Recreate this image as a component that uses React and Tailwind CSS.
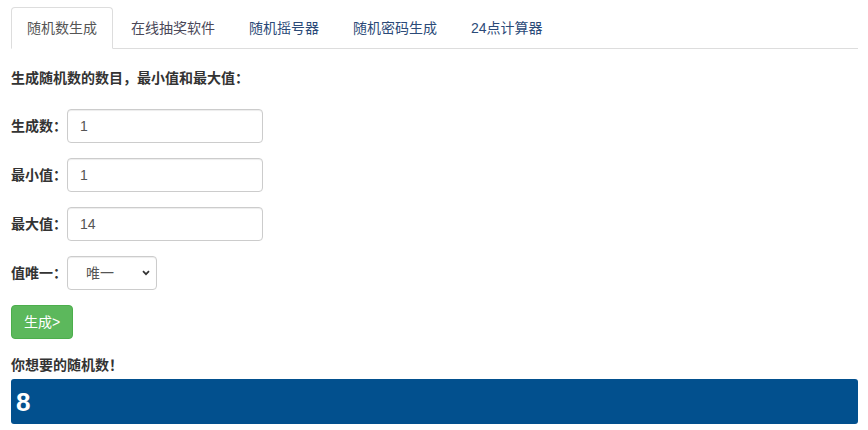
const tabs = [
  { label: '随机数生成', active: true, color: 'text-[#555]' },
  { label: '在线抽奖软件', color: 'text-[#4a4858]' },
  { label: '随机摇号器', color: 'text-[#2b4a78]' },
  { label: '随机密码生成', color: 'text-[#2b4a78]' },
  { label: '24点计算器', color: 'text-[#2b4a78]' }
];

const fields = [
  { label: '生成数：', value: '1' },
  { label: '最小值：', value: '1' },
  { label: '最大值：', value: '14' }
];

const inputClass =
  'h-[34px] rounded-[4px] border border-[#ccc] bg-white px-3 text-[14px] text-[#555] shadow-[inset_0_1px_1px_rgba(0,0,0,0.075)] outline-none';

export default function App() {
  return (
    <div
      className="min-h-[430px] bg-white pl-[11px] pr-[10px] pt-[7px] text-[14px] leading-[20px] text-[#333]"
      style={{ fontFamily: '"Liberation Sans", "Noto Sans CJK SC", sans-serif' }}
    >
      <ul className="flex border-b border-[#ddd]">
        {tabs.map((tab) => (
          <li key={tab.label} className="-mb-px mr-[2px]">
            <a
              href="#"
              className={`block rounded-t-[4px] border px-[15px] py-[10px] leading-[20px] ${
                tab.active ? 'border-[#ddd] border-b-white bg-white' : 'border-transparent'
              } ${tab.color}`}
            >
              {tab.label}
            </a>
          </li>
        ))}
      </ul>

      <p className="mt-[19px] font-bold">生成随机数的数目，最小值和最大值：</p>

      <div className="mt-[21px] flex flex-col gap-[15px]">
        {fields.map((f) => (
          <div key={f.label} className="flex items-center">
            <label className="w-[56px] font-bold">{f.label}</label>
            <input className={`${inputClass} w-[196px]`} defaultValue={f.value} />
          </div>
        ))}

        <div className="flex items-center">
          <label className="w-[56px] font-bold">值唯一：</label>
          <div className="relative">
            <select
              className={`${inputClass} w-[90px] appearance-none pl-[18px]`}
              defaultValue="1"
            >
              <option value="1">唯一</option>
              <option value="0">不唯一</option>
            </select>
            <svg
              className="pointer-events-none absolute right-[7px] top-[14px]"
              width="8"
              height="6"
              viewBox="0 0 8 6"
              fill="none"
            >
              <path d="M1 1.2l3 3 3-3" stroke="#333" strokeWidth="1.7" />
            </svg>
          </div>
        </div>

        <div>
          <button
            type="button"
            className="h-[34px] rounded-[4px] border border-[#4cae4c] bg-[#5cb85c] px-3 text-[14px] text-white"
          >
            生成&gt;
          </button>
        </div>
      </div>

      <p className="mt-[16px] font-bold">你想要的随机数！</p>

      <div className="mt-[4px] flex h-[45px] items-center rounded-[3px] bg-[#02508e] px-[5px] text-[26px] font-bold text-white">
        8
      </div>
    </div>
  );
}
